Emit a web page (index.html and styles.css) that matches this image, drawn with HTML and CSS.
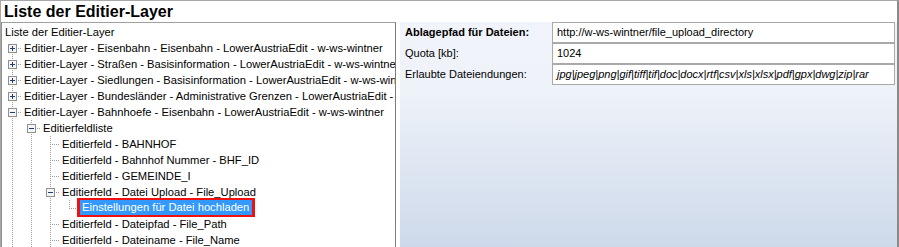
FILE: index.html
```html
<!DOCTYPE html>
<html lang="de">
<head>
<meta charset="utf-8">
<title>Liste der Editier-Layer</title>
<link rel="stylesheet" href="styles.css">
</head>
<body>
<div class="frame">
  <div class="title">Liste der Editier-Layer</div>
  <div class="main">
    <div class="tree">
      <div class="row"><span class="label root">Liste der Editier-Layer</span></div>
      <div class="row"><span class="cell f"><svg class="exp" viewBox="0 0 9 9" width="9" height="9"><rect x="0.5" y="0.5" width="8" height="8" fill="#f6f6f6" stroke="#8e8f8f"/><path d="M2 4.5h5M4.5 2v5" stroke="#1f3b73"/></svg></span><span class="label">Editier-Layer - Eisenbahn - Eisenbahn - LowerAustriaEdit - w-ws-wintner</span></div>
      <div class="row"><span class="cell t"><svg class="exp" viewBox="0 0 9 9" width="9" height="9"><rect x="0.5" y="0.5" width="8" height="8" fill="#f6f6f6" stroke="#8e8f8f"/><path d="M2 4.5h5M4.5 2v5" stroke="#1f3b73"/></svg></span><span class="label">Editier-Layer - Straßen - Basisinformation - LowerAustriaEdit - w-ws-wintner</span></div>
      <div class="row"><span class="cell t"><svg class="exp" viewBox="0 0 9 9" width="9" height="9"><rect x="0.5" y="0.5" width="8" height="8" fill="#f6f6f6" stroke="#8e8f8f"/><path d="M2 4.5h5M4.5 2v5" stroke="#1f3b73"/></svg></span><span class="label">Editier-Layer - Siedlungen - Basisinformation - LowerAustriaEdit - w-ws-wintner</span></div>
      <div class="row"><span class="cell t"><svg class="exp" viewBox="0 0 9 9" width="9" height="9"><rect x="0.5" y="0.5" width="8" height="8" fill="#f6f6f6" stroke="#8e8f8f"/><path d="M2 4.5h5M4.5 2v5" stroke="#1f3b73"/></svg></span><span class="label">Editier-Layer - Bundesländer - Administrative Grenzen - LowerAustriaEdit - w-ws-wintner</span></div>
      <div class="row"><span class="cell t"><svg class="exp" viewBox="0 0 9 9" width="9" height="9"><rect x="0.5" y="0.5" width="8" height="8" fill="#f6f6f6" stroke="#8e8f8f"/><path d="M2 4.5h5" stroke="#1f3b73"/></svg></span><span class="label">Editier-Layer - Bahnhoefe - Eisenbahn - LowerAustriaEdit - w-ws-wintner</span></div>
      <div class="row"><span class="cell v"></span><span class="cell t"><svg class="exp" viewBox="0 0 9 9" width="9" height="9"><rect x="0.5" y="0.5" width="8" height="8" fill="#f6f6f6" stroke="#8e8f8f"/><path d="M2 4.5h5" stroke="#1f3b73"/></svg></span><span class="label">Editierfeldliste</span></div>
      <div class="row"><span class="cell v"></span><span class="cell v"></span><span class="cell t"></span><span class="label">Editierfeld - BAHNHOF</span></div>
      <div class="row"><span class="cell v"></span><span class="cell v"></span><span class="cell t"></span><span class="label">Editierfeld - Bahnhof Nummer - BHF_ID</span></div>
      <div class="row"><span class="cell v"></span><span class="cell v"></span><span class="cell t"></span><span class="label">Editierfeld - GEMEINDE_I</span></div>
      <div class="row"><span class="cell v"></span><span class="cell v"></span><span class="cell t"><svg class="exp" viewBox="0 0 9 9" width="9" height="9"><rect x="0.5" y="0.5" width="8" height="8" fill="#f6f6f6" stroke="#8e8f8f"/><path d="M2 4.5h5" stroke="#1f3b73"/></svg></span><span class="label">Editierfeld - Datei Upload - File_Upload</span></div>
      <div class="row"><span class="cell v"></span><span class="cell v"></span><span class="cell v"></span><span class="cell l"></span><span class="label selected">Einstellungen für Datei hochladen</span></div>
      <div class="row"><span class="cell v"></span><span class="cell v"></span><span class="cell t"></span><span class="label">Editierfeld - Dateipfad - File_Path</span></div>
      <div class="row"><span class="cell v"></span><span class="cell v"></span><span class="cell t"></span><span class="label">Editierfeld - Dateiname - File_Name</span></div>
    </div>
    <div class="props">
      <div class="plabel bold">Ablagepfad für Dateien:</div>
      <div class="pvalue">http://w-ws-wintner/file_upload_directory</div>
      <div class="plabel">Quota [kb]:</div>
      <div class="pvalue">1024</div>
      <div class="plabel">Erlaubte Dateiendungen:</div>
      <div class="pvalue italic">jpg|jpeg|png|gif|tiff|tif|doc|docx|rtf|csv|xls|xlsx|pdf|gpx|dwg|zip|rar</div>
    </div>
  </div>
</div>
</body>
</html>
```

FILE: styles.css
```css
html, body {
  margin: 0;
  padding: 0;
  background: #ffffff;
}

body {
  font-family: "Liberation Sans", Arial, sans-serif;
  font-size: 11px;
  color: #000000;
}

.frame {
  box-sizing: border-box;
  width: 899px;
  height: 247px;
  overflow: hidden;
  border-top: 1px solid #a7a7a7;
  border-left: 1px solid #a7a7a7;
  border-right: 2px solid #8a8a8a;
  display: flex;
  flex-direction: column;
}

.title {
  height: 21px;
  line-height: 21px;
  padding-left: 3px;
  font-size: 16px;
  font-weight: bold;
  white-space: nowrap;
  flex: none;
}

.main {
  display: flex;
  gap: 4px;
  flex: 1;
  min-height: 0;
}

.tree {
  box-sizing: border-box;
  width: 395px;
  flex: none;
  border-top: 1px solid #a0a0a0;
  border-left: 1px solid #8f8f8f;
  border-right: 1px solid #7d7d7d;
  padding-top: 1px;
  overflow: hidden;
  background: #ffffff;
  font-size: 11.2px;
}

.row {
  display: flex;
  height: 16px;
  align-items: center;
  white-space: nowrap;
}

.cell {
  flex: none;
  width: 19px;
  height: 16px;
  display: flex;
  align-items: flex-start;
  background-repeat: no-repeat;
}

.exp {
  display: block;
  margin-left: 6px;
  margin-top: 4px;
}

.v {
  background-image: repeating-linear-gradient(to bottom, #a0a0a0 0 1px, transparent 1px 2px);
  background-size: 1px 16px;
  background-position: 10px 0;
}

.t {
  background-image:
    repeating-linear-gradient(to right, #a0a0a0 0 1px, transparent 1px 2px),
    repeating-linear-gradient(to bottom, #a0a0a0 0 1px, transparent 1px 2px);
  background-size: 9px 1px, 1px 16px;
  background-position: 10px 8px, 10px 0;
}

.l {
  background-image:
    repeating-linear-gradient(to right, #a0a0a0 0 1px, transparent 1px 2px),
    repeating-linear-gradient(to bottom, #a0a0a0 0 1px, transparent 1px 2px);
  background-size: 9px 1px, 1px 9px;
  background-position: 10px 8px, 10px 0;
}

.f {
  background-image:
    repeating-linear-gradient(to right, #a0a0a0 0 1px, transparent 1px 2px),
    repeating-linear-gradient(to bottom, #a0a0a0 0 1px, transparent 1px 2px);
  background-size: 9px 1px, 1px 8px;
  background-position: 10px 8px, 10px 8px;
}

.label {
  line-height: 16px;
  padding-left: 3px;
  flex: none;
}

.label.selected {
  align-self: flex-start;
  margin-top: -2px;
  margin-left: -1px;
  padding: 0 3px 0 2px;
  line-height: 15px;
  border: 3px solid #f01010;
  border-top-width: 2px;
  border-bottom-width: 2px;
  background: #3399ff;
  color: #ffffff;
}

.props {
  box-sizing: border-box;
  width: 497px;
  flex: none;
  display: grid;
  grid-template-columns: 152px 343px;
  grid-auto-rows: 21px;
  align-content: start;
  background: linear-gradient(to bottom, #f1f4fa 0px, #eef2f9 70px, #cdd9ea 225px);
}

.plabel {
  padding-left: 5px;
  line-height: 21px;
  white-space: nowrap;
}

.bold {
  font-weight: bold;
}

.pvalue {
  box-sizing: border-box;
  height: 21px;
  background: #ffffff;
  border: 1px solid #a9a9a9;
  padding-left: 4px;
  line-height: 19px;
  white-space: nowrap;
  overflow: hidden;
}

.italic {
  font-style: italic;
}
```
